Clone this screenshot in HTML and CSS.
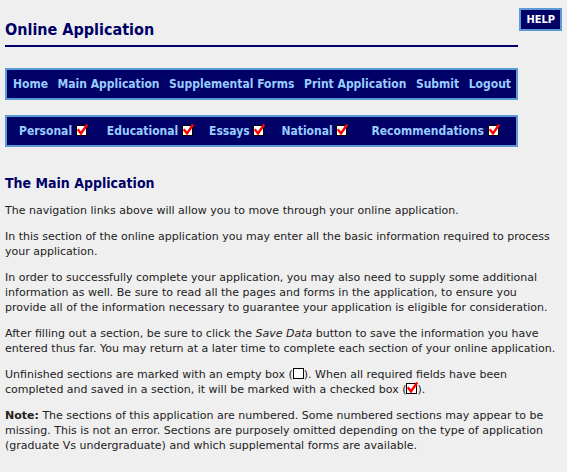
FILE: index.html
```html
<!DOCTYPE html>
<html>
<head>
<meta charset="utf-8">
<link rel="stylesheet" href="styles.css">
</head>
<body>
<div class="page">
  <div class="top">
    <div class="title-block">
      <h1 class="title">Online Application</h1>
    </div>
    <a class="help" href="#">HELP</a>
  </div>

  <nav class="bar bar-main">
    <a href="#">Home</a>
    <a href="#">Main Application</a>
    <a href="#">Supplemental Forms</a>
    <a href="#">Print Application</a>
    <a href="#">Submit</a>
    <a href="#">Logout</a>
  </nav>

  <nav class="bar bar-sections">
    <a href="#">Personal <span class="box checked"><svg viewBox="0 0 12 12" width="12" height="12"><path d="M2.5 6.2 L5 9.5 L10.5 1.5" fill="none" stroke="#ff0000" stroke-width="2.4" stroke-linecap="square"/></svg></span></a>
    <a href="#">Educational <span class="box checked"><svg viewBox="0 0 12 12" width="12" height="12"><path d="M2.5 6.2 L5 9.5 L10.5 1.5" fill="none" stroke="#ff0000" stroke-width="2.4" stroke-linecap="square"/></svg></span></a>
    <a href="#">Essays <span class="box checked"><svg viewBox="0 0 12 12" width="12" height="12"><path d="M2.5 6.2 L5 9.5 L10.5 1.5" fill="none" stroke="#ff0000" stroke-width="2.4" stroke-linecap="square"/></svg></span></a>
    <a href="#">National <span class="box checked"><svg viewBox="0 0 12 12" width="12" height="12"><path d="M2.5 6.2 L5 9.5 L10.5 1.5" fill="none" stroke="#ff0000" stroke-width="2.4" stroke-linecap="square"/></svg></span></a>
    <a href="#">Recommendations <span class="box checked"><svg viewBox="0 0 12 12" width="12" height="12"><path d="M2.5 6.2 L5 9.5 L10.5 1.5" fill="none" stroke="#ff0000" stroke-width="2.4" stroke-linecap="square"/></svg></span></a>
  </nav>

  <h2 class="heading">The Main Application</h2>

  <div class="content">
    <p>The navigation links above will allow you to move through your online application.</p>
    <p>In this section of the online application you may enter all the basic information required to process your application.</p>
    <p>In order to successfully complete your application, you may also need to supply some additional information as well. Be sure to read all the pages and forms in the application, to ensure you provide all of the information necessary to guarantee your application is eligible for consideration.</p>
    <p>After filling out a section, be sure to click the <em>Save Data</em> button to save the information you have entered thus far. You may return at a later time to complete each section of your online application.</p>
    <p>Unfinished sections are marked with an empty box (<span class="box"></span>). When all required fields have been completed and saved in a section, it will be marked with a checked box (<span class="box checked"><svg viewBox="0 0 12 12" width="12" height="12"><path d="M2.5 6.2 L5 9.5 L10.5 1.5" fill="none" stroke="#ff0000" stroke-width="2.4" stroke-linecap="square"/></svg></span>).</p>
    <p><strong>Note:</strong> The sections of this application are numbered. Some numbered sections may appear to be missing. This is not an error. Sections are purposely omitted depending on the type of application (graduate Vs undergraduate) and which supplemental forms are available.</p>
  </div>
</div>
</body>
</html>
```

FILE: styles.css
```css
html, body {
  margin: 0;
  padding: 0;
  background: #efefef;
}

.page {
  padding: 0 5px;
  font-family: "DejaVu Sans Condensed", "DejaVu Sans", sans-serif;
  font-size: 11px;
  line-height: 15px;
  color: #222222;
}

.top {
  display: flex;
  align-items: flex-start;
  justify-content: space-between;
}

.title-block {
  width: 513px;
  border-bottom: 2px solid #000066;
  padding-top: 19px;
  padding-bottom: 5px;
}

.title {
  margin: 0;
  font-size: 16px;
  line-height: 21px;
  font-weight: bold;
  color: #000066;
}

.help {
  margin-top: 8px;
  display: block;
  background: #000066;
  border: 2px solid #5b9bd5;
  color: #ffffff;
  font-weight: bold;
  font-size: 11px;
  line-height: 19px;
  padding: 0 5px;
  text-decoration: none;
}

.bar {
  box-sizing: content-box;
  background: #000066;
  border: 2px solid #5b9bd5;
  display: flex;
  align-items: center;
  height: 28px;
  font-weight: bold;
  font-size: 12px;
}

.bar a {
  color: #99ccff;
  text-decoration: none;
  white-space: nowrap;
}

.bar-main {
  justify-content: space-between;
  margin-top: 21px;
  padding-left: 6px;
  padding-right: 5px;
  width: 498px;
}

.bar-sections {
  justify-content: flex-start;
  gap: 20px;
  margin-top: 15px;
  padding-left: 12px;
  width: 497px;
}

.bar-sections a:nth-child(3) {
  margin-left: -4px;
}

.bar-sections a:nth-child(4) {
  margin-left: -3px;
}

.bar-sections a:nth-child(5) {
  margin-left: 4px;
}

.box {
  display: inline-block;
  box-sizing: border-box;
  width: 11px;
  height: 11px;
  border: 1px solid #000000;
  background: #ffffff;
  vertical-align: -1px;
  position: relative;
}

.box svg {
  position: absolute;
  left: -1px;
  top: -2px;
}

.heading {
  margin: 27px 0 11px;
  font-size: 14px;
  line-height: 18px;
  font-weight: bold;
  color: #000066;
}

.content {
  font-family: "DejaVu Sans", sans-serif;
  font-size: 11px;
  line-height: 15px;
  padding-right: 3px;
}

.content p {
  margin: 0 0 11px;
}
```
